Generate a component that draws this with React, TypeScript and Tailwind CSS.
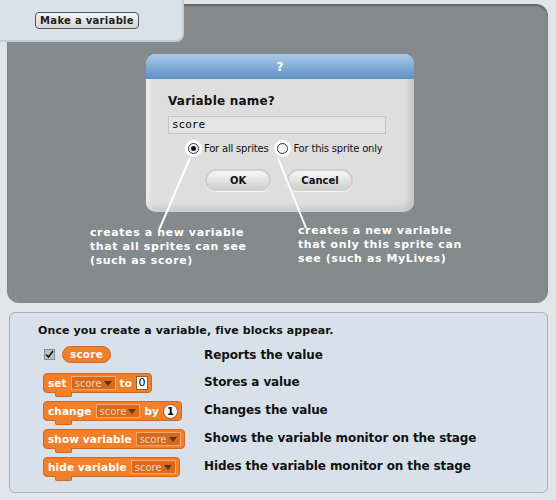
import React from 'react';

const font = { fontFamily: '"DejaVu Sans", "Liberation Sans", sans-serif' };

const Dropdown: React.FC = () => (
  <span className="inline-flex items-center h-[14px] px-[3px] gap-[2px] bg-[#d9691d] border border-[#f6a870] text-[#f5d2b4] text-[10px] font-normal tracking-normal">
    score
    <svg width="8" height="5" viewBox="0 0 8 5"><path d="M0 0 L8 0 L4 5 Z" fill="#5b3516" /></svg>
  </span>
);

const Block: React.FC<{ children: React.ReactNode }> = ({ children }) => (
  <div className="relative inline-flex">
    <div className="flex items-center gap-[4px] h-[20px] pl-[4px] pr-[3px] bg-[#f2802a] border border-[#d2661a] rounded-[4px] text-white text-[10.5px] font-bold tracking-[0.1px] whitespace-nowrap">
      {children}
    </div>
    <div className="absolute left-[12px] -bottom-[4px] w-[17px] h-[5px] bg-[#f2802a] border-b border-x border-[#d2661a] rounded-b-[2px]" />
  </div>
);

const rows: { desc: string; block: React.ReactNode }[] = [
  {
    desc: 'Reports the value',
    block: (
      <div className="flex items-center gap-[7px] pl-[1px]">
        <span className="w-[11px] h-[11px] bg-[#bfc3c6] border border-[#8a8e92] flex items-center justify-center">
          <svg width="9" height="9" viewBox="0 0 9 9"><path d="M1 4.5 L3.5 7 L8 1" stroke="#111" strokeWidth="1.6" fill="none" /></svg>
        </span>
        <span className="h-[17px] px-[7px] flex items-center rounded-full bg-[#f2802a] border border-[#d2661a] text-white text-[10.5px] font-bold tracking-[0.2px]">score</span>
      </div>
    ),
  },
  {
    desc: 'Stores a value',
    block: (
      <Block>
        set <Dropdown /> to
        <span className="w-[12px] h-[14px] bg-white border border-[#8a5a30] text-black text-[11px] font-normal flex items-center justify-center">0</span>
      </Block>
    ),
  },
  {
    desc: 'Changes the value',
    block: (
      <Block>
        change <Dropdown /> by
        <span className="w-[15px] h-[15px] rounded-full bg-white border border-[#8a5a30] text-black text-[10px] font-bold flex items-center justify-center">1</span>
      </Block>
    ),
  },
  { desc: 'Shows the variable monitor on the stage', block: <Block>show variable <Dropdown /></Block> },
  { desc: 'Hides the variable monitor on the stage', block: <Block>hide variable <Dropdown /></Block> },
];

const App: React.FC = () => {
  return (
    <div className="relative w-[556px] h-[500px] bg-[#e1e5e9] overflow-hidden" style={font}>
      {/* Stage area */}
      <div className="relative ml-[7px] mt-[4px] w-[541px] h-[299px] rounded-[12px] bg-[#858a8d] shadow-[inset_0_2px_2px_rgba(0,0,0,0.25)] pt-[50px]">
        {/* Dialog */}
        <div className="ml-[139px] w-[268px] h-[158px] rounded-[10px] bg-[#dedede] shadow-[inset_-4px_-4px_6px_rgba(0,0,0,0.12),inset_3px_0_4px_rgba(255,255,255,0.6)] overflow-hidden">
          <div className="h-[25px] bg-gradient-to-b from-[#a9cbe9] to-[#5e8fc5] flex items-center justify-center text-white text-[12px] font-bold">?</div>
          <div className="px-[22px] pt-[13px]">
            <div className="text-[12px] font-bold text-[#111] tracking-[0.2px]">Variable name?</div>
            <div className="mt-[6px] h-[18px] w-[218px] bg-[#e4e4e4] border border-[#c4c4c4] text-[11px] text-black flex items-center pl-[3px]" style={{ fontFamily: '"DejaVu Sans Mono", monospace' }}>score</div>
            <div className="mt-[6px] flex items-center text-[10px] text-[#111] tracking-[-0.2px]">
              <span className="ml-[17px] w-[17px] h-[17px] rounded-full bg-white flex items-center justify-center">
                <span className="w-[11px] h-[11px] rounded-full border border-[#333] bg-[#f4f4f4] flex items-center justify-center">
                  <span className="w-[5px] h-[5px] rounded-full bg-[#111]" />
                </span>
              </span>
              <span className="ml-[2px]">For all sprites</span>
              <span className="ml-[6px] w-[17px] h-[17px] rounded-full bg-white flex items-center justify-center">
                <span className="w-[11px] h-[11px] rounded-full border border-[#333] bg-[#f4f4f4]" />
              </span>
              <span className="ml-[2px]">For this sprite only</span>
            </div>
            <div className="mt-[12px] flex gap-[16px] pl-[37px]">
              <div className="w-[66px] h-[22px] rounded-full bg-gradient-to-b from-[#f8f8f8] to-[#d0d0d0] border-2 border-[#cfcfcf] shadow-[0_1px_1px_rgba(255,255,255,0.8)] flex items-center justify-center text-[10px] font-bold text-[#111]">OK</div>
              <div className="w-[66px] h-[22px] rounded-full bg-gradient-to-b from-[#f8f8f8] to-[#d0d0d0] border-2 border-[#cfcfcf] shadow-[0_1px_1px_rgba(255,255,255,0.8)] flex items-center justify-center text-[10px] font-bold text-[#111]">Cancel</div>
            </div>
          </div>
        </div>

        {/* Annotations */}
        <div className="mt-[14px] flex text-white text-[11px] font-bold tracking-[0.6px] leading-[14px]">
          <div className="ml-[83px] w-[200px]">creates a new variable<br />that all sprites can see<br />(such as score)</div>
          <div className="ml-[8px] -mt-[2px] w-[220px]">creates a new variable<br />that only this sprite can<br />see (such as MyLives)</div>
        </div>

        <svg className="absolute left-0 top-0 pointer-events-none" width="541" height="299">
          <line x1="183" y1="154" x2="152" y2="226" stroke="white" strokeWidth="2" />
          <line x1="271" y1="154" x2="299" y2="224" stroke="white" strokeWidth="2" />
        </svg>
      </div>

      {/* Make a variable tab */}
      <div className="absolute left-0 top-0 w-[184px] h-[42px] bg-[#d9e1e9] border-r-2 border-b-2 border-[#c4ccd4] rounded-br-[8px] pl-[35px] pt-[12px]">
        <div className="w-[104px] h-[17px] rounded-[4px] border border-[#555] bg-gradient-to-b from-[#f4f4f4] to-[#d4d4d4] flex items-center justify-center text-[10px] font-bold text-[#222] tracking-[0.3px] whitespace-nowrap">Make a variable</div>
      </div>

      {/* Blocks panel */}
      <div className="ml-[9px] mt-[9px] w-[539px] h-[181px] rounded-[6px] border border-[#a9b1b9] bg-[#d8e1e9] pl-[28px] pt-[10px]">
        <div className="text-[11px] font-bold text-[#111] tracking-[0.1px]">Once you create a variable, five blocks appear.</div>
        <div className="mt-[6px] flex flex-col gap-[8px]">
          {rows.map((r, i) => (
            <div key={i} className={`flex items-center ${i === 0 ? 'h-[18px]' : 'h-[20px]'}`}>
              <div className="w-[166px] pl-[5px]">{r.block}</div>
              <div className="text-[12px] font-bold text-[#111] tracking-[-0.1px]">{r.desc}</div>
            </div>
          ))}
        </div>
      </div>
    </div>
  );
};

export default App;
